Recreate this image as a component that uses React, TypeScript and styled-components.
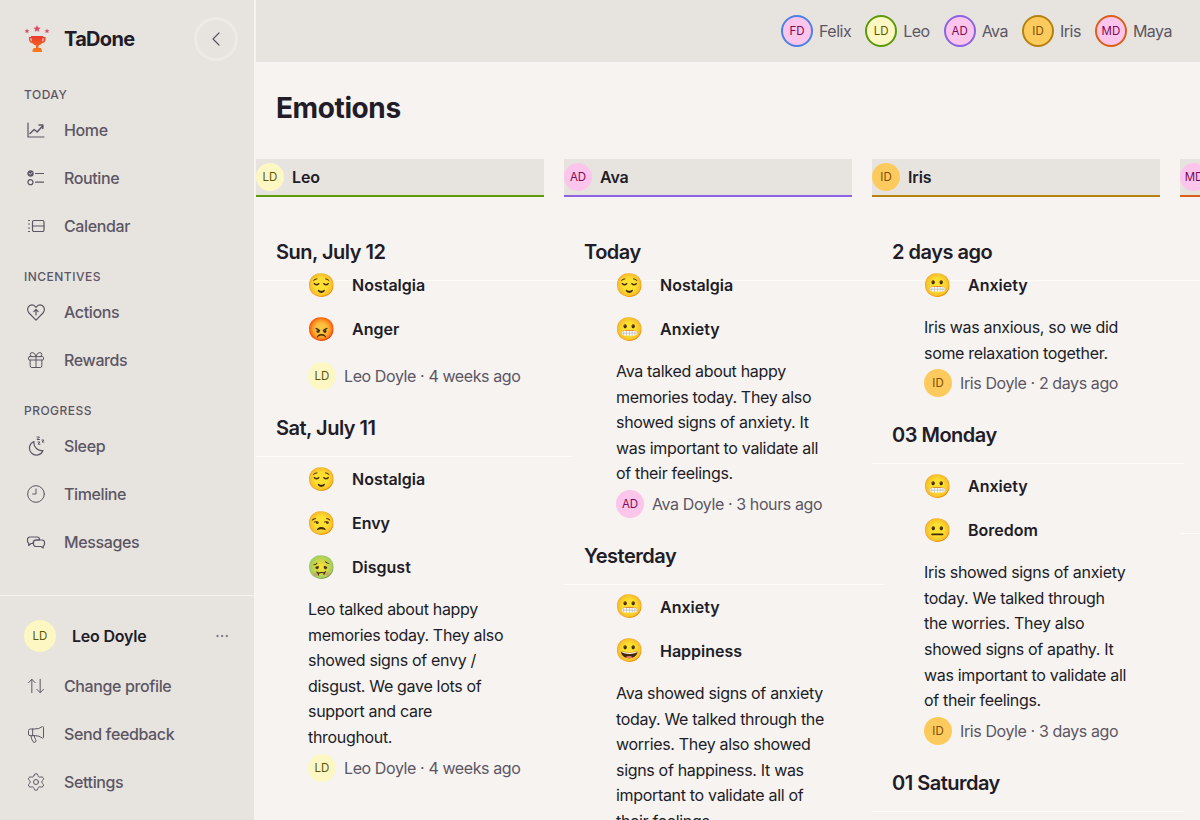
import React from "react";
import styled, { createGlobalStyle } from "styled-components";
import { ArrowUpDown, ChevronLeft, Clock9, Ellipsis, Gift, Megaphone, Settings } from "lucide-react";

type Tone = "yellow" | "pink" | "amber";

const tones: Record<Tone, { bg: string; fg: string }> = {
  yellow: { bg: "#fdf7c3", fg: "#5f5700" },
  pink: { bg: "#fcc5ec", fg: "#7c0a55" },
  amber: { bg: "#fdca5e", fg: "#7d4e00" },
};

const stroke = {
  fill: "none",
  stroke: "currentColor",
  strokeWidth: 1.2,
  strokeLinecap: "round" as const,
  strokeLinejoin: "round" as const,
};

const HomeIcon = () => (
  <svg width="20" height="20" viewBox="0 0 20 20" {...stroke}>
    <path d="M2 3v14h16" />
    <path d="M4 13.500l4.200-4 3 2.500 5.300-6" strokeWidth={1.5} />
    <path d="M13 5h3.800v3.600" strokeWidth={1.5} />
  </svg>
);

const RoutineIcon = () => (
  <svg width="20" height="20" viewBox="0 0 20 20" {...stroke}>
    <circle cx="4.500" cy="5.500" r="2.600" fill="currentColor" />
    <path d="M3.400 5.500l.9.9 1.500-1.700" stroke="#e7e4df" strokeWidth={0.9} />
    <path d="M9.500 5.500h8" />
    <circle cx="4.500" cy="14.200" r="2.500" />
    <path d="M9.500 14.200h8" />
  </svg>
);

const CalendarIcon = () => (
  <svg width="20" height="20" viewBox="0 0 20 20" {...stroke}>
    <path d="M8 4.500h8.500a1.500 1.500 0 0 1 1.500 1.500v8a1.500 1.500 0 0 1-1.500 1.500H8A1.500 1.500 0 0 1 6.500 14V6A1.500 1.500 0 0 1 8 4.500z" />
    <path d="M6.500 10H18" />
    <path d="M2.500 4.500h1M2.500 8h1M2.500 12h1M2.500 15.500h1" />
  </svg>
);

const ActionsIcon = () => (
  <svg width="20" height="20" viewBox="0 0 20 20" {...stroke}>
    <path d="M10 18.200L3 11C.9 8.700 1.300 5.300 3.500 3.800c2.100-1.400 4.800-.8 6.500 1.500 1.700-2.300 4.400-2.900 6.500-1.500 2.200 1.500 2.600 4.900.5 7.200L10 18.200z" />
    <path d="M10 13V7.500M7.800 9.600L10 7.400l2.200 2.200" />
  </svg>
);

const SleepIcon = () => (
  <svg width="20" height="20" viewBox="0 0 20 20" {...stroke}>
    <path d="M8 5.500a7 7 0 1 0 9 9c-4.500 1-10-3.500-9-9z" />
    <path d="M11 1h2.500L11 3.500h2.500M12 6h2l-2 2.200h2M16 4h1.800L16 6h1.800" strokeWidth={1} />
  </svg>
);

const MessagesIcon = () => (
  <svg width="20" height="20" viewBox="0 0 20 20" {...stroke}>
    <path d="M4 5h7a2.500 2.500 0 0 1 2.500 2.500V8H10a3 3 0 0 0-3 3v.5H5L2.800 13.500V11.300A2.500 2.500 0 0 1 1.500 9V7.500A2.500 2.500 0 0 1 4 5z" />
    <path d="M10 8h6a2.500 2.500 0 0 1 2.500 2.500v1.500a2.500 2.500 0 0 1-1.300 2.200V16L15 14.500h-5A2.500 2.500 0 0 1 7.500 12v-1.500A2.500 2.500 0 0 1 10 8z" />
  </svg>
);

const Trophy = () => (
  <svg width="26" height="28" viewBox="0 0 26 28">
    <defs>
      <linearGradient id="cup" x1="0" y1="0" x2="0" y2="1">
        <stop offset="0" stopColor="#e8392f" />
        <stop offset="1" stopColor="#fb7d1a" />
      </linearGradient>
    </defs>
    <path fill="#dd4a68" d="M13 0l1 2.500 2.600.2-2 1.700.7 2.600L13 5.600 10.700 7l.7-2.600-2-1.700 2.600-.2z" />
    <path fill="#dd4a68" d="M3 3.500l.7 1.700 1.800.1-1.400 1.200.5 1.800L3 7.300l-1.600 1 .5-1.800L.5 5.300l1.800-.1z" />
    <path fill="#dd4a68" d="M23 3.500l.7 1.700 1.800.1-1.400 1.200.5 1.800-1.600-1-1.600 1 .5-1.800-1.400-1.200 1.800-.1z" />
    <path fill="url(#cup)" d="M7 11h12v1h2.500v2.500c0 2.300-1.800 3.700-3.600 3.800-.8 1.200-2 1.900-3.400 2.100V23h2.500v1.500h1V27H8.500v-2.500h1V23H12v-2.600c-1.400-.2-2.600-.9-3.400-2.100-1.800-.1-3.600-1.500-3.600-3.800V12H7zm-.6 2.300v1.200c0 1 .6 1.800 1.500 2.100-.3-1-.4-2.100-.4-3.300zm13.200 0h-1.100c0 1.200-.1 2.300-.4 3.300.9-.3 1.500-1.100 1.500-2.100z" />
  </svg>
);

const nav = [
  {
    label: "Today",
    items: [
      { name: "Home", icon: <HomeIcon /> },
      { name: "Routine", icon: <RoutineIcon /> },
      { name: "Calendar", icon: <CalendarIcon /> },
    ],
  },
  {
    label: "Incentives",
    items: [
      { name: "Actions", icon: <ActionsIcon /> },
      { name: "Rewards", icon: <Gift size={20} strokeWidth={1.2} /> },
    ],
  },
  {
    label: "Progress",
    items: [
      { name: "Sleep", icon: <SleepIcon /> },
      { name: "Timeline", icon: <Clock9 size={20} strokeWidth={1.2} /> },
      { name: "Messages", icon: <MessagesIcon /> },
    ],
  },
];

const footerLinks = [
  { name: "Change profile", icon: <ArrowUpDown size={20} strokeWidth={1.2} /> },
  { name: "Send feedback", icon: <Megaphone size={20} strokeWidth={1.2} /> },
  { name: "Settings", icon: <Settings size={20} strokeWidth={1.2} /> },
];

const people: { name: string; initials: string; tone: Tone; ring: string }[] = [
  { name: "Felix", initials: "FD", tone: "pink", ring: "#4c80e4" },
  { name: "Leo", initials: "LD", tone: "yellow", ring: "#5c9a0a" },
  { name: "Ava", initials: "AD", tone: "pink", ring: "#8b63e3" },
  { name: "Iris", initials: "ID", tone: "amber", ring: "#b5820f" },
  { name: "Maya", initials: "MD", tone: "pink", ring: "#db5f17" },
];

type Entry = {
  moods: [string, string][];
  note?: string;
  by: string;
};

type Section = { title: string; entry: Entry };

const columns: { person: number; rule: number; sections: Section[] }[] = [
  {
    person: 1,
    rule: 316,
    sections: [
      {
        title: "Sun, July 12",
        entry: { moods: [["😌", "Nostalgia"], ["😡", "Anger"]], by: "Leo Doyle · 4 weeks ago" },
      },
      {
        title: "Sat, July 11",
        entry: {
          moods: [["😌", "Nostalgia"], ["😒", "Envy"], ["🤢", "Disgust"]],
          note: "Leo talked about happy memories today. They also showed signs of envy / disgust. We gave lots of support and care throughout.",
          by: "Leo Doyle · 4 weeks ago",
        },
      },
    ],
  },
  {
    person: 2,
    rule: 320,
    sections: [
      {
        title: "Today",
        entry: {
          moods: [["😌", "Nostalgia"], ["😬", "Anxiety"]],
          note: "Ava talked about happy memories today. They also showed signs of anxiety. It was important to validate all of their feelings.",
          by: "Ava Doyle · 3 hours ago",
        },
      },
      {
        title: "Yesterday",
        entry: {
          moods: [["😬", "Anxiety"], ["😀", "Happiness"]],
          note: "Ava showed signs of anxiety today. We talked through the worries. They also showed signs of happiness. It was important to validate all of their feelings.",
          by: "Ava Doyle · 1 day ago",
        },
      },
    ],
  },
  {
    person: 3,
    rule: 312,
    sections: [
      {
        title: "2 days ago",
        entry: {
          moods: [["😬", "Anxiety"]],
          note: "Iris was anxious, so we did some relaxation together.",
          by: "Iris Doyle · 2 days ago",
        },
      },
      {
        title: "03 Monday",
        entry: {
          moods: [["😬", "Anxiety"], ["😐", "Boredom"]],
          note: "Iris showed signs of anxiety today. We talked through the worries. They also showed signs of apathy. It was important to validate all of their feelings.",
          by: "Iris Doyle · 3 days ago",
        },
      },
      {
        title: "01 Saturday",
        entry: { moods: [["😐", "Boredom"]], by: "Iris Doyle · 5 days ago" },
      },
    ],
  },
  {
    person: 4,
    rule: 316,
    sections: [
      {
        title: "Today",
        entry: {
          moods: [["😀", "Happiness"], ["😌", "Nostalgia"]],
          note: "Maya talked about happy memories today. It was a good day for them all.",
          by: "Maya Doyle · 2 hours ago",
        },
      },
      {
        title: "Yesterday",
        entry: { moods: [["😀", "Happiness"]], by: "Maya Doyle · 1 day ago" },
      },
    ],
  },
];

const App = () => {
  const leo = people[1];
  return (
    <>
      <GlobalStyle />
      <Layout>
        <Sidebar>
          <Brand>
            <BrandMark>
              <Trophy />
            </BrandMark>
            <BrandName>TaDone</BrandName>
            <CollapseButton aria-label="Collapse">
              <ChevronLeft size={24} strokeWidth={1.2} />
            </CollapseButton>
          </Brand>

          <Groups>
            {nav.map((group) => (
              <Group key={group.label}>
                <GroupLabel>{group.label}</GroupLabel>
                {group.items.map((item) => (
                  <NavItem key={item.name}>
                    <NavIcon>{item.icon}</NavIcon>
                    {item.name}
                  </NavItem>
                ))}
              </Group>
            ))}
          </Groups>

          <SidebarFooter>
            <Profile>
              <Avatar $tone={leo.tone} $size={32}>
                {leo.initials}
              </Avatar>
              <ProfileName>Leo Doyle</ProfileName>
              <Ellipsis size={16} strokeWidth={1.2} />
            </Profile>
            {footerLinks.map((item) => (
              <NavItem key={item.name}>
                <NavIcon>{item.icon}</NavIcon>
                {item.name}
              </NavItem>
            ))}
          </SidebarFooter>
        </Sidebar>

        <Main>
          <TopBar>
            {people.map((p) => (
              <Person key={p.name}>
                <RingAvatar $tone={p.tone} $ring={p.ring}>
                  {p.initials}
                </RingAvatar>
                {p.name}
              </Person>
            ))}
          </TopBar>

          <Title>Emotions</Title>

          <Board>
            {columns.map((col) => {
              const owner = people[col.person];
              return (
                <Column key={owner.name}>
                  <ColumnHead $accent={owner.ring}>
                    <Avatar $tone={owner.tone} $size={28}>
                      {owner.initials}
                    </Avatar>
                    {owner.name}
                  </ColumnHead>
                  {col.sections.map((section, i) => (
                    <div key={section.title}>
                      <DayTitle $rule={col.rule}>{section.title}</DayTitle>
                      <EntryBody $first={i === 0}>
                        {section.entry.moods.map(([emoji, mood]) => (
                          <MoodRow key={mood}>
                            <Emoji>{emoji}</Emoji>
                            {mood}
                          </MoodRow>
                        ))}
                        {section.entry.note && <Note $rule={col.rule}>{section.entry.note}</Note>}
                        <Author $plain={!section.entry.note}>
                          <Avatar $tone={owner.tone} $size={28}>
                            {owner.initials}
                          </Avatar>
                          {section.entry.by}
                        </Author>
                      </EntryBody>
                    </div>
                  ))}
                </Column>
              );
            })}
          </Board>
        </Main>
      </Layout>
    </>
  );
};

export default App;

const GlobalStyle = createGlobalStyle`
  html, body {
    margin: 0;
    height: 100%;
    overflow: hidden;
  }

  body {
    font-family: Inter, "Liberation Sans", "Noto Color Emoji", sans-serif;
    font-size: 16px;
    color: #211c27;
    background-color: #f6f3f0;
  }

  * {
    box-sizing: border-box;
  }
`;

const Layout = styled.div`
  display: flex;
  width: 1200px;
  height: 820px;
  overflow: hidden;
`;

const Sidebar = styled.aside`
  display: flex;
  flex: 0 0 256px;
  flex-direction: column;
  background-color: #e7e4df;
  border-right: 2px solid #f6f3f0;
`;

const Brand = styled.div`
  display: flex;
  align-items: center;
  height: 78px;
  padding: 0 16px 0 24px;
`;

const BrandMark = styled.div`
  display: flex;
  width: 40px;
`;

const BrandName = styled.div`
  flex: 1;
  font-size: 20px;
  font-weight: 700;
  letter-spacing: -0.7px;
`;

const CollapseButton = styled.button`
  display: flex;
  align-items: center;
  justify-content: center;
  width: 44px;
  height: 44px;
  padding: 0;
  color: #5c5664;
  background: transparent;
  border: 3px solid #eeebe7;
  border-radius: 50%;
`;

const Groups = styled.nav`
  display: flex;
  flex: 1;
  flex-direction: column;
  gap: 16px;
  padding: 6px 0 0;
`;

const Group = styled.div`
  display: flex;
  flex-direction: column;
`;

const GroupLabel = styled.div`
  height: 22px;
  padding: 1px 24px 0;
  font-size: 12px;
  font-weight: 500;
  line-height: 20px;
  letter-spacing: 0.04em;
  text-transform: uppercase;
  color: #5c5664;
`;

const NavItem = styled.div`
  display: flex;
  align-items: center;
  gap: 16px;
  height: 48px;
  padding: 0 24px;
  font-weight: 500;
  letter-spacing: -0.38px;
  color: #5c5664;
`;

const NavIcon = styled.span`
  display: flex;
  align-items: center;
  justify-content: center;
  width: 24px;
`;

const SidebarFooter = styled.div`
  padding: 16px 0 14px;
  border-top: 1px solid #f6f3f0;
`;

const Profile = styled.div`
  display: flex;
  align-items: center;
  gap: 16px;
  height: 50px;
  padding: 0 24px 2px;
  color: #5c5664;
`;

const ProfileName = styled.div`
  flex: 1;
  font-weight: 600;
  letter-spacing: -0.2px;
  color: #211c27;
`;

const Avatar = styled.span<{ $tone: Tone; $size: number }>`
  display: flex;
  flex: 0 0 ${(p) => p.$size}px;
  align-items: center;
  justify-content: center;
  width: ${(p) => p.$size}px;
  height: ${(p) => p.$size}px;
  font-size: 11.5px;
  font-weight: 400;
  letter-spacing: 0;
  color: ${(p) => tones[p.$tone].fg};
  background-color: ${(p) => tones[p.$tone].bg};
  border-radius: 50%;
`;

const RingAvatar = styled.span<{ $tone: Tone; $ring: string }>`
  display: flex;
  align-items: center;
  justify-content: center;
  width: 32px;
  height: 32px;
  font-size: 11.5px;
  letter-spacing: 0;
  color: ${(p) => tones[p.$tone].fg};
  background-color: ${(p) => tones[p.$tone].bg};
  border: 2px solid ${(p) => p.$ring};
  border-radius: 50%;
`;

const Main = styled.main`
  display: flex;
  flex: 1;
  flex-direction: column;
  min-width: 0;
`;

const TopBar = styled.header`
  display: flex;
  flex: 0 0 62px;
  align-items: center;
  justify-content: flex-end;
  gap: 14px;
  padding: 0 28px 0 0;
  background-color: #e7e4df;
`;

const Person = styled.div`
  display: flex;
  align-items: center;
  gap: 6px;
  letter-spacing: -0.5px;
  color: #5c5664;
`;

const Title = styled.h1`
  flex: 0 0 auto;
  margin: 28px 0 33px 20px;
  font-size: 28px;
  font-weight: 700;
  line-height: 36px;
  letter-spacing: -0.4px;
`;

const Board = styled.div`
  display: flex;
  flex: 0 0 auto;
  gap: 20px;
`;

const Column = styled.section`
  flex: 0 0 288px;
  width: 288px;
  min-width: 0;
`;

const ColumnHead = styled.div<{ $accent: string }>`
  display: flex;
  align-items: center;
  gap: 8px;
  height: 38px;
  margin-bottom: 17px;
  font-weight: 600;
  letter-spacing: -0.1px;
  background-color: #e7e4df;
  border-bottom: 2px solid ${(p) => p.$accent};
`;

const DayTitle = styled.h2<{ $rule: number }>`
  width: ${(p) => p.$rule}px;
  margin: 0;
  padding: 24px 0 14px 20px;
  font-size: 20px;
  font-weight: 600;
  line-height: 28px;
  letter-spacing: -0.5px;
  border-bottom: 1px solid #fffdfc;
`;

const EntryBody = styled.div<{ $first: boolean }>`
  margin-top: ${(p) => (p.$first ? "-18px" : "0")};
  padding: 0 0 0 52px;
`;

const MoodRow = styled.div`
  position: relative;
  display: flex;
  align-items: center;
  gap: 16px;
  height: 44px;
  font-weight: 600;
`;

const Emoji = styled.span`
  display: flex;
  justify-content: center;
  width: 28px;
  font-size: 23px;
  font-family: "Noto Color Emoji", sans-serif;
`;

const Note = styled.p<{ $rule: number }>`
  width: ${(p) => p.$rule - 106}px;
  margin: 8px 0 3px;
  line-height: 25.6px;
  letter-spacing: -0.32px;
`;

const Author = styled.div<{ $plain: boolean }>`
  display: flex;
  align-items: center;
  gap: 8px;
  height: 28px;
  margin-top: ${(p) => (p.$plain ? "11px" : "0")};
  white-space: nowrap;
  letter-spacing: -0.4px;
  color: #5c5664;
`;
